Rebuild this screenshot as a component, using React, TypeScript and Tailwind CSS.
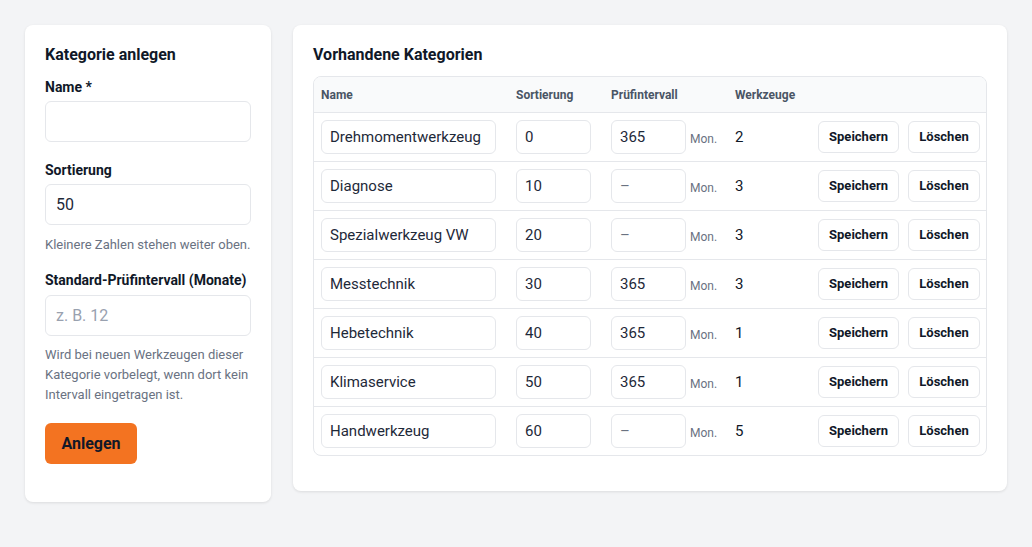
import React from "react";

type Kategorie = {
  name: string;
  sort: number;
  interval: string;
  count: number;
};

const kategorien: Kategorie[] = [
  { name: "Drehmomentwerkzeug", sort: 0, interval: "365", count: 2 },
  { name: "Diagnose", sort: 10, interval: "", count: 3 },
  { name: "Spezialwerkzeug VW", sort: 20, interval: "", count: 3 },
  { name: "Messtechnik", sort: 30, interval: "365", count: 3 },
  { name: "Hebetechnik", sort: 40, interval: "365", count: 1 },
  { name: "Klimaservice", sort: 50, interval: "365", count: 1 },
  { name: "Handwerkzeug", sort: 60, interval: "", count: 5 },
];

const cellInput =
  "h-[34px] rounded-md border border-gray-200 bg-white px-2 text-[15px] text-gray-800 placeholder:text-gray-500 outline-none";

const rowButton =
  "h-[32px] rounded-md border border-gray-200 bg-white text-[13px] font-bold text-gray-900";

const App = () => {
  return (
    <div
      className="min-h-[547px] bg-[#f3f4f6] p-[25px] flex items-start gap-[22px]"
      style={{ fontFamily: "Roboto, 'Noto Sans', sans-serif" }}
    >
      {/* Neue Kategorie */}
      <div className="w-[246px] shrink-0 rounded-lg bg-white px-5 pt-[20px] pb-[38px] shadow-[0_1px_3px_rgba(0,0,0,0.1)]">
        <h2 className="text-base leading-5 font-bold text-gray-900">Kategorie anlegen</h2>

        <label className="mt-[12px] mb-1 block text-sm leading-5 font-bold text-gray-900">Name *</label>
        <input className="block h-[41px] w-full rounded-md border border-gray-200 bg-white px-[10px] text-base text-gray-800 outline-none" />

        <label className="mt-[18px] mb-1 block text-sm leading-5 font-bold text-gray-900">Sortierung</label>
        <input
          defaultValue="50"
          className="block h-[41px] w-full rounded-md border border-gray-200 bg-white px-[10px] text-base text-gray-800 outline-none"
        />
        <p className="mt-[10px] text-[13px] leading-5 text-gray-500">Kleinere Zahlen stehen weiter oben.</p>

        <label className="mt-[15px] mb-[5px] block text-sm leading-5 font-bold text-gray-900">
          Standard-Prüfintervall (Monate)
        </label>
        <input
          placeholder="z. B. 12"
          className="block h-[41px] w-full rounded-md border border-gray-200 bg-white px-[10px] text-base text-gray-800 placeholder:text-gray-400 outline-none"
        />
        <p className="mt-[9px] text-[13px] leading-5 text-gray-500">
          Wird bei neuen Werkzeugen dieser Kategorie vorbelegt, wenn dort kein Intervall eingetragen ist.
        </p>

        <button className="mt-[18px] h-[41px] w-[92px] rounded-md bg-[#f37321] text-base font-bold text-gray-900">
          Anlegen
        </button>
      </div>

      {/* Vorhandene Kategorien */}
      <div className="flex-1 rounded-lg bg-white px-5 pt-[20px] pb-[35px] shadow-[0_1px_3px_rgba(0,0,0,0.1)]">
        <h2 className="text-base leading-5 font-bold text-gray-900">Vorhandene Kategorien</h2>

        <div className="mt-[11px] overflow-hidden rounded-lg border border-gray-200">
          <div className="flex h-[35px] items-center bg-gray-50 pl-[7px] pr-[6px] text-xs font-bold text-gray-600">
            <div className="w-[195px]">Name</div>
            <div className="w-[95px]">Sortierung</div>
            <div className="w-[124px]">Prüfintervall</div>
            <div className="flex-1">Werkzeuge</div>
          </div>

          {kategorien.map((k) => (
            <div
              key={k.name}
              className="flex h-[49px] items-center border-t border-gray-200 pl-[7px] pr-[6px]"
            >
              <div className="w-[195px]">
                <input defaultValue={k.name} className={`${cellInput} w-[175px]`} />
              </div>
              <div className="w-[95px]">
                <input defaultValue={String(k.sort)} className={`${cellInput} w-[75px]`} />
              </div>
              <div className="flex w-[124px] items-center">
                <input defaultValue={k.interval} placeholder="–" className={`${cellInput} w-[75px]`} />
                <span className="ml-[4px] mt-[3px] text-xs text-gray-500">Mon.</span>
              </div>
              <div className="flex-1 text-[15px] text-gray-900">{k.count}</div>
              <div className="flex gap-[9px]">
                <button className={`${rowButton} w-[81px]`}>Speichern</button>
                <button className={`${rowButton} w-[72px]`}>Löschen</button>
              </div>
            </div>
          ))}
        </div>
      </div>
    </div>
  );
};

export default App;
